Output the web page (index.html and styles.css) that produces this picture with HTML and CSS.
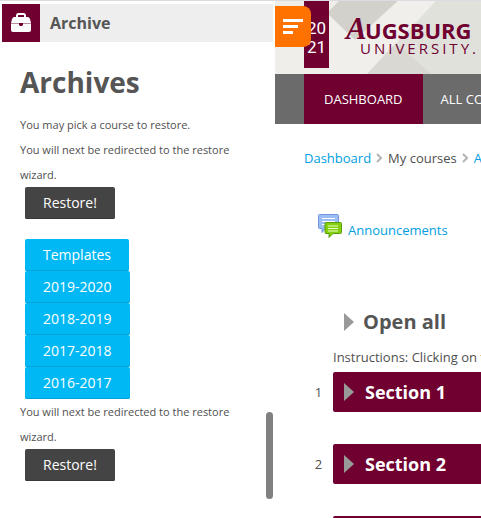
FILE: index.html
```html
<!DOCTYPE html>
<html lang="en">
<head>
<meta charset="utf-8">
<title>Augsburg University</title>
<link rel="stylesheet" href="styles.css">
</head>
<body>
<div class="app">
  <aside class="sidebar">
    <header class="block-head">
      <span class="block-icon">
        <svg width="22" height="20" viewBox="0 0 22 20" aria-hidden="true">
          <path d="M7 5V2.500Q7 1 8.500 1h5Q15 1 15 2.500V5" fill="none" stroke="#fff" stroke-width="2"/>
          <path d="M4 4h14q1 0 2 2l1 4v7q0 2-2 2H3q-2 0-2-2v-7l1-4q1-2 2-2z" fill="#fff"/>
          <path d="M1 10h20v1H1z" fill="#b78da0"/>
          <path d="M9 10h4v2l-1 1h-2l-1-1z" fill="#6f0030"/>
        </svg>
      </span>
      <h2>Archive</h2>
    </header>
    <div class="block-body">
      <h1>Archives</h1>
      <p>You may pick a course to restore.</p>
      <p>You will next be redirected to the restore wizard.</p>
      <button class="btn btn-dark" type="button">Restore!</button>
      <div class="years">
        <button class="btn btn-blue" type="button">Templates</button>
        <button class="btn btn-blue" type="button">2019-2020</button>
        <button class="btn btn-blue" type="button">2018-2019</button>
        <button class="btn btn-blue" type="button">2017-2018</button>
        <button class="btn btn-blue" type="button">2016-2017</button>
      </div>
      <p>You will next be redirected to the restore wizard.</p>
      <button class="btn btn-dark" type="button">Restore!</button>
    </div>
    <div class="scroll-thumb"></div>
  </aside>

  <div class="page">
    <header class="banner">
      <svg class="facets" viewBox="0 0 206 73" preserveAspectRatio="xMinYMin slice" aria-hidden="true">
        <path d="M0 0h206v73H0z" fill="#efeeea"/>
        <path d="M121 37L158 0h48v73H92z" fill="#e1e1dc"/>
        <path d="M52 12L64 0h59L80 39z" fill="#d2d1cc"/>
        <path d="M123 0h38L92 73H50V12l30 27z" fill="#f0efec"/>
        <path d="M121 42l35 31H92z" fill="#d9d8d2"/>
      </svg>
      <svg class="logo" width="180" height="68" viewBox="0 0 180 68" role="img" aria-label="Augsburg University 2021">
        <path d="M0 0h25v67H0z" fill="#6f0030"/>
        <text class="logo-year" x="3" y="33">20</text>
        <text class="logo-year" x="3" y="52">21</text>
        <text class="logo-a" x="42" y="38">A</text>
        <text class="logo-name" x="61" y="38">UGSBURG</text>
        <text class="logo-sub" x="56" y="53">UNIVERSITY.</text>
      </svg>
      <button class="drawer-toggle" type="button" aria-label="Toggle blocks">
        <svg width="20" height="16" viewBox="0 0 20 16" aria-hidden="true">
          <path d="M0 0h20v3H0zM0 6h15v3H0zM0 12h10v3H0z" fill="#fff"/>
        </svg>
      </button>
    </header>
    <nav class="main-nav">
      <a class="active" href="#">DASHBOARD</a>
      <a href="#">ALL COURSES</a>
    </nav>
    <main>
      <nav class="crumbs">
        <a href="#">Dashboard</a>
        <svg class="chev" width="7" height="10" viewBox="0 0 7 10" aria-hidden="true"><path d="M1 1l4 4-4 4" /></svg>
        <span>My courses</span>
        <svg class="chev" width="7" height="10" viewBox="0 0 7 10" aria-hidden="true"><path d="M1 1l4 4-4 4" /></svg>
        <a href="#">Archive</a>
      </nav>
      <a class="forum" href="#">
        <svg width="24" height="24" viewBox="0 0 24 24" aria-hidden="true">
          <path d="M1.500.5h18q1 0 1 1v12q0 1-1 1H7l-3 4v-4H1.500q-1 0-1-1v-12q0-1 1-1z" fill="#9dbdf5" stroke="#6f96dd"/>
          <path d="M4 4.500h13M4 7.500h13M4 10.500h13" stroke="#fff"/>
          <path d="M8 8.500h14.500q1 0 1 1v9q0 1-1 1H15l-4 4v-4H8q-1 0-1-1v-9q0-1 1-1z" fill="#85cf0c" stroke="#5b9c10"/>
          <path d="M10 12h10M10 14.500h10M10 17h10" stroke="#eaffc8"/>
        </svg>
        <span>Announcements</span>
      </a>
      <button class="open-all" type="button"><span class="tri"></span>Open all</button>
      <p class="hint">Instructions: Clicking on the section name will show / hide the section.</p>
      <ol class="sections">
        <li><span class="num">1</span><button class="section" type="button"><span class="tri"></span>Section 1</button></li>
        <li><span class="num">2</span><button class="section" type="button"><span class="tri"></span>Section 2</button></li>
        <li><span class="num">3</span><button class="section" type="button"><span class="tri"></span>Section 3</button></li>
      </ol>
    </main>
  </div>
</div>
</body>
</html>
```
FILE: styles.css
```css
* { box-sizing: border-box; }

body {
  margin: 0;
  background: #fff;
  color: #4f4f4f;
  font: 13px/20px "Open Sans", "Noto Sans", sans-serif;
}

h1, h2, p, ol { margin: 0; padding: 0; }
a { color: #009ee0; text-decoration: none; }
button { border: 0; font-family: inherit; cursor: pointer; }

.app {
  display: flex;
  height: 100vh;
  overflow: hidden;
  border-top: 1px solid #dcdce0;
}

/* Block drawer */
.sidebar {
  position: relative;
  flex: 0 0 275px;
  padding: 3px 2px;
}

.block-head {
  display: flex;
  align-items: center;
  gap: 10px;
  background: #eee;
}

.block-icon {
  display: grid;
  place-items: center;
  width: 38px;
  height: 38px;
  background: #6f0030;
}

.block-head h2 { font-size: 16px; line-height: 24px; color: #555; }

.block-body { padding: 20px 18px; font-size: 11px; line-height: 25px; }
.block-body h1 { margin-bottom: 10px; font-size: 28px; line-height: 40px; color: #555; }

.btn {
  display: block;
  height: 32px;
  margin-left: 5px;
  padding: 0 18px;
  border-radius: 2px;
  color: #fff;
  font-size: 14px;
  font-weight: 500;
  line-height: 20px;
}

.btn-dark { background: #444; box-shadow: inset 0 -1px #3a3638; }
.btn-blue { background: #00b8f4; box-shadow: inset 0 -1px #00a2d8; }
.years { padding-top: 20px; }

.scroll-thumb {
  position: absolute;
  right: 2px;
  bottom: 19px;
  width: 7px;
  height: 87px;
  border-radius: 4px;
  background: #808080;
}

/* Course page */
.page { flex: 1; min-width: 0; overflow: hidden; }

.banner { position: relative; height: 73px; padding-left: 29px; background: #efeeea; }
.facets { position: absolute; inset: 0; width: 100%; height: 100%; }
.logo { position: relative; display: block; }
.logo-year { fill: #fff; font: 17px Roboto, sans-serif; }
.logo-a { fill: #6f0030; font: italic bold 31px "Liberation Serif", serif; }
.logo-name { fill: #6f0030; font: bold 22px "Open Sans", sans-serif; }
.logo-sub { fill: #6f0030; font: 15px "Open Sans", sans-serif; letter-spacing: 3px; }

.drawer-toggle {
  position: absolute;
  top: 5px;
  left: 0;
  width: 36px;
  height: 41px;
  padding: 0 8px;
  border-radius: 0 8px 8px 0;
  background: #ff7200;
}
.drawer-toggle svg { display: block; }

.main-nav { display: flex; height: 50px; padding-left: 29px; background: #6b6b6b; }
.main-nav a { padding: 15px 20px; color: #fff; white-space: nowrap; }
.main-nav a + a { padding-left: 18px; }
.main-nav .active { background: #6f0030; }

main { padding: 24px 0 0 29px; white-space: nowrap; }

.crumbs { display: flex; align-items: center; gap: 5px; }
.chev { flex: none; fill: none; stroke: #b4b4b4; stroke-width: 2; }

.forum { display: flex; align-items: flex-end; gap: 6px; margin: 46px 0 0 14px; }
.forum svg { margin-bottom: 2px; }

.tri {
  flex: none;
  border: solid transparent;
  border-width: 9px 0 9px 10px;
  border-left-color: #999;
}

.open-all {
  display: flex;
  align-items: center;
  gap: 9px;
  margin: 67px 0 10px 29px;
  padding: 0 11px;
  background: none;
  color: #555;
  font-size: 20px;
  font-weight: 700;
  line-height: 30px;
}

.hint { margin-left: 29px; padding-bottom: 5px; }

.sections { display: grid; gap: 32px; list-style: none; }
.sections li { display: flex; align-items: center; }
.num { flex: 0 0 29px; text-align: center; }

.section {
  display: flex;
  flex: 1;
  align-items: center;
  gap: 11px;
  height: 40px;
  padding: 0 11px;
  border-radius: 2px 0 0 2px;
  background: #6f0030;
  color: #fff;
  font-size: 18px;
  font-weight: 700;
}
```
